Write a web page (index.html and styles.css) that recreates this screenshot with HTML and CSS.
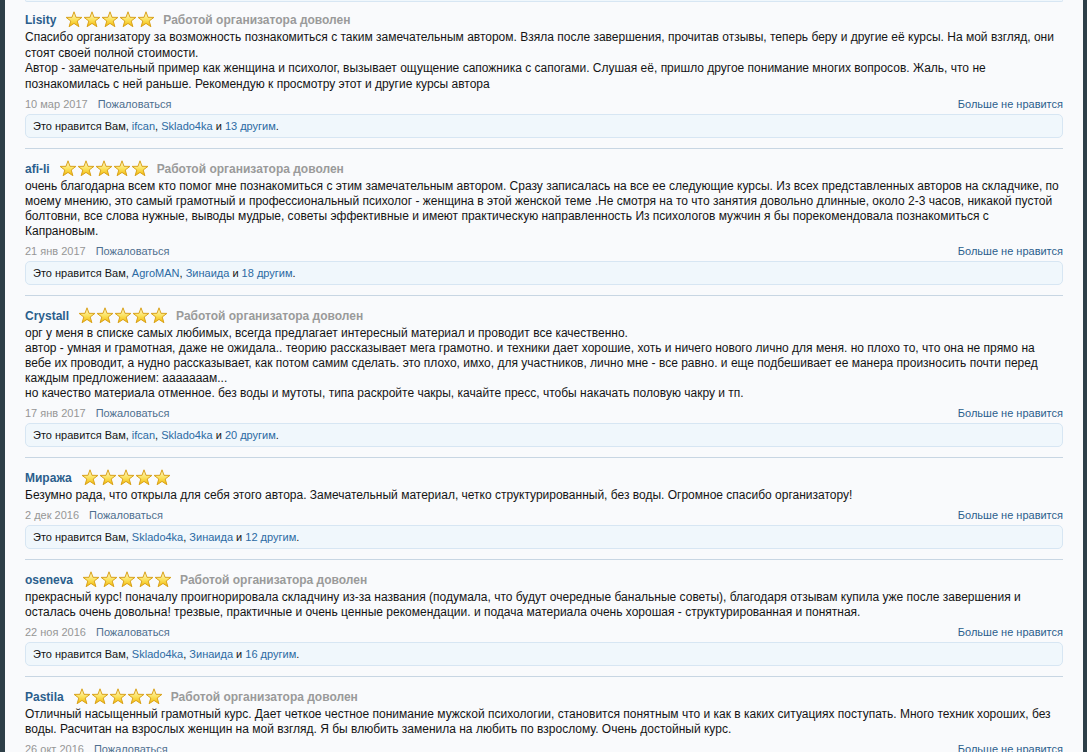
FILE: index.html
```html
<!DOCTYPE html>
<html lang="ru">
<head>
  <meta charset="UTF-8" />
  <title>Отзывы</title>
  <link rel="stylesheet" href="styles.css">
</head>
<body>
  <svg class="defs" width="0" height="0" aria-hidden="true">
    <defs>
      <linearGradient id="starFill" x1="0" y1="0" x2="0" y2="1">
        <stop offset="0" stop-color="#fffbd6"/>
        <stop offset="0.55" stop-color="#fbe15a"/>
        <stop offset="1" stop-color="#f2b705"/>
      </linearGradient>
      <symbol id="star" viewBox="0 0 18 18">
        <path d="M9 0.8 L11 6.3 L16.9 6.4 L12.2 10 L13.9 15.7 L9 12.4 L4.1 15.7 L5.8 10 L1.1 6.4 L7 6.3Z" fill="url(#starFill)" stroke="#d9a21c" stroke-width="1" stroke-linejoin="round"/>
      </symbol>
    </defs>
  </svg>

  <div class="page">
    <div class="content">
      <div class="likes-tail"></div>

      <ol class="reviews">
        <li class="review">
          <div class="head">
            <a class="username" href="#">Lisity</a>
            <span class="stars"><svg><use href="#star"/></svg><svg><use href="#star"/></svg><svg><use href="#star"/></svg><svg><use href="#star"/></svg><svg><use href="#star"/></svg></span>
            <span class="verdict">Работой организатора доволен</span>
          </div>
          <blockquote class="text">Спасибо организатору за возможность познакомиться с таким замечательным автором. Взяла после завершения, прочитав отзывы, теперь беру и другие её курсы. На мой взгляд, они стоят своей полной стоимости.<br>Автор - замечательный пример как женщина и психолог, вызывает ощущение сапожника с сапогами. Слушая её, пришло другое понимание многих вопросов. Жаль, что не познакомилась с ней раньше. Рекомендую к просмотру этот и другие курсы автора</blockquote>
          <div class="meta">
            <span class="date">10 мар 2017</span>
            <a class="report" href="#">Пожаловаться</a>
            <a class="unlike" href="#">Больше не нравится</a>
          </div>
          <div class="likes">Это нравится Вам, <a href="#">ifcan</a>, <a href="#">Sklado4ka</a> и <a href="#">13 другим</a>.</div>
        </li>

        <li class="review">
          <div class="head">
            <a class="username" href="#">afi-li</a>
            <span class="stars"><svg><use href="#star"/></svg><svg><use href="#star"/></svg><svg><use href="#star"/></svg><svg><use href="#star"/></svg><svg><use href="#star"/></svg></span>
            <span class="verdict">Работой организатора доволен</span>
          </div>
          <blockquote class="text">очень благодарна всем кто помог мне познакомиться с этим замечательным автором. Сразу записалась на все ее следующие курсы. Из всех представленных авторов на складчике, по моему мнению, это самый грамотный и профессиональный психолог - женщина в этой женской теме .Не смотря на то что занятия довольно длинные, около 2-3 часов, никакой пустой болтовни, все слова нужные, выводы мудрые, советы эффективные и имеют практическую направленность Из психологов мужчин я бы порекомендовала познакомиться с Капрановым.</blockquote>
          <div class="meta">
            <span class="date">21 янв 2017</span>
            <a class="report" href="#">Пожаловаться</a>
            <a class="unlike" href="#">Больше не нравится</a>
          </div>
          <div class="likes">Это нравится Вам, <a href="#">AgroMAN</a>, <a href="#">Зинаида</a> и <a href="#">18 другим</a>.</div>
        </li>

        <li class="review">
          <div class="head">
            <a class="username" href="#">Crystall</a>
            <span class="stars"><svg><use href="#star"/></svg><svg><use href="#star"/></svg><svg><use href="#star"/></svg><svg><use href="#star"/></svg><svg><use href="#star"/></svg></span>
            <span class="verdict">Работой организатора доволен</span>
          </div>
          <blockquote class="text">орг у меня в списке самых любимых, всегда предлагает интересный материал и проводит все качественно.<br>автор - умная и грамотная, даже не ожидала.. теорию рассказывает мега грамотно. и техники дает хорошие, хоть и ничего нового лично для меня. но плохо то, что она не прямо на вебе их проводит, а нудно рассказывает, как потом самим сделать. это плохо, имхо, для участников, лично мне - все равно. и еще подбешивает ее манера произносить почти перед каждым предложением: ааааааам...<br>но качество материала отменное. без воды и мутоты, типа раскройте чакры, качайте пресс, чтобы накачать половую чакру и тп.</blockquote>
          <div class="meta">
            <span class="date">17 янв 2017</span>
            <a class="report" href="#">Пожаловаться</a>
            <a class="unlike" href="#">Больше не нравится</a>
          </div>
          <div class="likes">Это нравится Вам, <a href="#">ifcan</a>, <a href="#">Sklado4ka</a> и <a href="#">20 другим</a>.</div>
        </li>

        <li class="review">
          <div class="head">
            <a class="username" href="#">Миража</a>
            <span class="stars"><svg><use href="#star"/></svg><svg><use href="#star"/></svg><svg><use href="#star"/></svg><svg><use href="#star"/></svg><svg><use href="#star"/></svg></span>
          </div>
          <blockquote class="text">Безумно рада, что открыла для себя этого автора. Замечательный материал, четко структурированный, без воды. Огромное спасибо организатору!</blockquote>
          <div class="meta">
            <span class="date">2 дек 2016</span>
            <a class="report" href="#">Пожаловаться</a>
            <a class="unlike" href="#">Больше не нравится</a>
          </div>
          <div class="likes">Это нравится Вам, <a href="#">Sklado4ka</a>, <a href="#">Зинаида</a> и <a href="#">12 другим</a>.</div>
        </li>

        <li class="review">
          <div class="head">
            <a class="username" href="#">oseneva</a>
            <span class="stars"><svg><use href="#star"/></svg><svg><use href="#star"/></svg><svg><use href="#star"/></svg><svg><use href="#star"/></svg><svg><use href="#star"/></svg></span>
            <span class="verdict">Работой организатора доволен</span>
          </div>
          <blockquote class="text">прекрасный курс! поначалу проигнорировала складчину из-за названия (подумала, что будут очередные банальные советы), благодаря отзывам купила уже после завершения и осталась очень довольна! трезвые, практичные и очень ценные рекомендации. и подача материала очень хорошая - структурированная и понятная.</blockquote>
          <div class="meta">
            <span class="date">22 ноя 2016</span>
            <a class="report" href="#">Пожаловаться</a>
            <a class="unlike" href="#">Больше не нравится</a>
          </div>
          <div class="likes">Это нравится Вам, <a href="#">Sklado4ka</a>, <a href="#">Зинаида</a> и <a href="#">16 другим</a>.</div>
        </li>

        <li class="review">
          <div class="head">
            <a class="username" href="#">Pastila</a>
            <span class="stars"><svg><use href="#star"/></svg><svg><use href="#star"/></svg><svg><use href="#star"/></svg><svg><use href="#star"/></svg><svg><use href="#star"/></svg></span>
            <span class="verdict">Работой организатора доволен</span>
          </div>
          <blockquote class="text">Отличный насыщенный грамотный курс. Дает четкое честное понимание мужской психологии, становится понятным что и как в каких ситуациях поступать. Много техник хороших, без воды. Расчитан на взрослых женщин на мой взгляд. Я бы влюбить заменила на любить по взрослому. Очень достойный курс.</blockquote>
          <div class="meta">
            <span class="date">26 окт 2016</span>
            <a class="report" href="#">Пожаловаться</a>
            <a class="unlike" href="#">Больше не нравится</a>
          </div>
          <div class="likes">Это нравится Вам, <a href="#">Sklado4ka</a> и <a href="#">9 другим</a>.</div>
        </li>
      </ol>
    </div>
  </div>
</body>
</html>
```

FILE: styles.css
```css
html, body {
  margin: 0;
  padding: 0;
  height: 100%;
  overflow: hidden;
}
body {
  background: #2e3f48;
  font-family: "Liberation Sans", Arial, sans-serif;
  font-size: 12px;
  color: #141414;
}
.defs {
  position: absolute;
}
.page {
  margin: 0 4px 0 5px;
  min-height: 100%;
  background: #f9fafc;
}
.content {
  padding: 0 20px;
}
a {
  text-decoration: none;
  color: #2b5e8c;
}
.likes-tail {
  height: 1px;
  border: 1px solid #d7e6f3;
  border-top: none;
  border-radius: 0 0 5px 5px;
  background: #f0f7fc;
}
.reviews {
  list-style: none;
  margin: 0;
  padding: 0;
}
.review {
  padding: 8px 0 10px;
  border-bottom: 1px solid #c8d6e3;
}
.review + .review {
  padding-top: 10px;
}
.head {
  display: flex;
  align-items: center;
  height: 20px;
}
.username {
  font-weight: bold;
  color: #2b5e8c;
}
.stars {
  display: flex;
  margin: 0 8px 0 9px;
}
.stars svg {
  width: 18px;
  height: 18px;
}
.verdict {
  font-weight: bold;
  color: #9a9a9a;
}
.text {
  margin: 0;
  line-height: 15px;
}
.review:first-child .text {
  line-height: 15.6px;
}
.meta {
  display: flex;
  align-items: center;
  margin-top: 5px;
  font-size: 11px;
  line-height: 14px;
}
.date {
  color: #969696;
}
.report {
  margin-left: 10px;
  color: #4f6f8f;
}
.unlike {
  margin-left: auto;
  color: #2b5e8c;
}
.likes {
  margin-top: 3px;
  padding: 4px 7px;
  font-size: 11px;
  line-height: 14px;
  border: 1px solid #d7e6f3;
  border-radius: 5px;
  background: #f0f7fc;
}
.likes a {
  color: #2b6aa3;
}
```
